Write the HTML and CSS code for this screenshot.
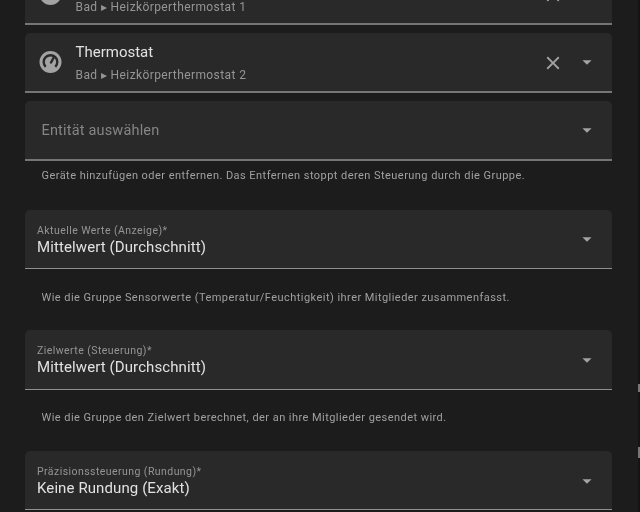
FILE: index.html
```html
<!DOCTYPE html>
<html lang="de">
<head>
<meta charset="utf-8">
<title>Gruppe</title>
<link rel="stylesheet" href="styles.css">
</head>
<body>
<div class="dialog">
  <div class="pane">
    <div class="field entity clipped">
      <svg class="ent-icon" viewBox="0 0 24 24"><circle class="disc" cx="11.500" cy="12" r="11"/></svg>
      <div class="ent-text"><div class="ent-name">Thermostat</div><div class="ent-sub">Bad ▸ Heizkörperthermostat 1</div></div>
      <svg class="clear" viewBox="0 0 24 24"><path d="M19 6.41 17.59 5 12 10.59 6.41 5 5 6.41 10.59 12 5 17.59 6.41 19 12 13.41 17.59 19 19 17.59 13.41 12z"/></svg>
      <svg class="caret" viewBox="0 0 24 24"><path d="M7 10l5 5 5-5z"/></svg>
    </div>
    <div class="field entity">
      <svg class="ent-icon" viewBox="0 0 24 24"><circle class="disc" cx="11.500" cy="12" r="11"/><path class="dial" d="M6.700 16.800A6.800 6.800 0 1 1 16.300 16.800"/><path class="needle" d="M12 12.500 14.500 8"/></svg>
      <div class="ent-text"><div class="ent-name">Thermostat</div><div class="ent-sub">Bad ▸ Heizkörperthermostat 2</div></div>
      <svg class="clear" viewBox="0 0 24 24"><path d="M19 6.41 17.59 5 12 10.59 6.41 5 5 6.41 10.59 12 5 17.59 6.41 19 12 13.41 17.59 19 19 17.59 13.41 12z"/></svg>
      <svg class="caret" viewBox="0 0 24 24"><path d="M7 10l5 5 5-5z"/></svg>
    </div>
    <div class="field placeholder">
      <span class="ph-text">Entität auswählen</span>
      <svg class="caret" viewBox="0 0 24 24"><path d="M7 10l5 5 5-5z"/></svg>
    </div>
    <p class="hint first">Geräte hinzufügen oder entfernen. Das Entfernen stoppt deren Steuerung durch die Gruppe.</p>
    <div class="field select">
      <div class="sel-text"><div class="sel-label">Aktuelle Werte (Anzeige)*</div><div class="sel-value">Mittelwert (Durchschnitt)</div></div>
      <svg class="caret" viewBox="0 0 24 24"><path d="M7 10l5 5 5-5z"/></svg>
    </div>
    <p class="hint">Wie die Gruppe Sensorwerte (Temperatur/Feuchtigkeit) ihrer Mitglieder zusammenfasst.</p>
    <div class="field select">
      <div class="sel-text"><div class="sel-label">Zielwerte (Steuerung)*</div><div class="sel-value">Mittelwert (Durchschnitt)</div></div>
      <svg class="caret" viewBox="0 0 24 24"><path d="M7 10l5 5 5-5z"/></svg>
    </div>
    <p class="hint">Wie die Gruppe den Zielwert berechnet, der an ihre Mitglieder gesendet wird.</p>
    <div class="field select">
      <div class="sel-text"><div class="sel-label">Präzisionssteuerung (Rundung)*</div><div class="sel-value">Keine Rundung (Exakt)</div></div>
      <svg class="caret" viewBox="0 0 24 24"><path d="M7 10l5 5 5-5z"/></svg>
    </div>
  </div>
</div>
<span class="edge-bit edge-a"></span>
<span class="edge-bit edge-b"></span>
</body>
</html>
```

FILE: styles.css
```css
* { box-sizing: border-box; }
html, body { margin: 0; height: 100%; overflow: hidden; background: #141414; }
body { font-family: Roboto, "Noto Sans", sans-serif; color: #e1e1e1; }
.dialog { width: 638px; height: 512px; overflow: hidden; background: #1c1c1c; filter: blur(.3px); }
.pane { display: flex; flex-direction: column; padding: 0 26px 0 24.5px; margin-top: -35px; }
.field { display: flex; align-items: center; background: #292929; border-radius: 5px 5px 0 0; border-bottom: 2px solid #757575; height: 60px; flex: none; }
.entity { margin-bottom: 8px; padding-left: 14px; }
.ent-icon { width: 24px; height: 24px; flex: none; margin-right: 13px; }
.disc { fill: #a3a3a3; }
.dial, .needle { fill: none; stroke: #292929; stroke-width: 2.4; }
.needle { stroke-linecap: round; }
.ent-text { flex: 1; min-width: 0; padding-top: 1px; }
.ent-name { font-size: 15px; line-height: 20px; color: #e1e1e1; }
.ent-sub { font-size: 12px; line-height: 16px; margin-top: 5px; color: #959595; letter-spacing: .4px; }
.clear { width: 22px; height: 22px; fill: #a3a3a3; flex: none; margin: 1px 12.5px 0 0; }
.caret { width: 22px; height: 22px; fill: #a3a3a3; flex: none; margin-right: 14px; }
.placeholder { padding-left: 17px; }
.ph-text { flex: 1; font-size: 14.5px; color: #858585; letter-spacing: .18px; }
.hint { margin: 20.5px 0 24.7px; padding-left: 17px; font-size: 11px; line-height: 16px; color: #a0a0a0; letter-spacing: .45px; }
.hint.first { margin: 7px 0 25.5px; }
.select { height: 59.5px; padding-left: 12.5px; border-bottom-width: 1px; border-bottom-color: #8f8f8f; }
.select .caret { margin-top: 1px; }
.sel-text { flex: 1; padding-top: 2.500px; }
.sel-label { font-size: 10.5px; line-height: 13px; color: #959595; letter-spacing: .44px; }
.sel-value { font-size: 15px; line-height: 20px; color: #e1e1e1; letter-spacing: .1px; }
.edge-bit { position: absolute; left: 638px; width: 2px; background: #767676; }
.edge-a { top: 384px; height: 8px; }
.edge-b { top: 447px; height: 11px; }
```
